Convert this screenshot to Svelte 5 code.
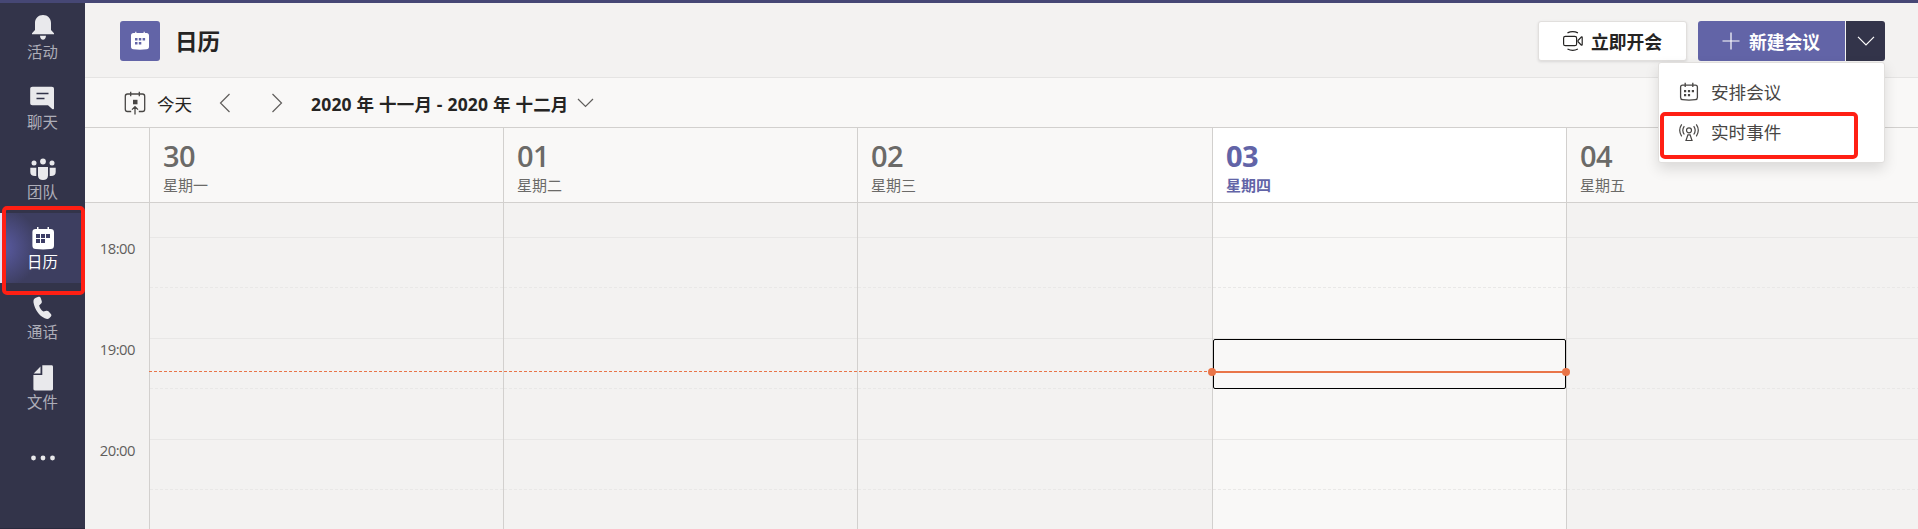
<script>
  const nav = [
    { id: 'activity', label: '活动' },
    { id: 'chat', label: '聊天' },
    { id: 'teams', label: '团队' },
    { id: 'calendar', label: '日历', active: true },
    { id: 'calls', label: '通话' },
    { id: 'files', label: '文件' },
    { id: 'more', label: '' }
  ];
  const days = [
    { num: '30', name: '星期一' },
    { num: '01', name: '星期二' },
    { num: '02', name: '星期三' },
    { num: '03', name: '星期四', today: true },
    { num: '04', name: '星期五' }
  ];
  const hours = ['18:00', '19:00', '20:00'];
</script>

<div class="app">
  <div class="strip"></div>
  <div class="body">
    <nav class="rail">
      {#each nav as item}
        <div class="item" class:active={item.active}>
          {#if item.id === 'activity'}
            <svg width="28" height="28" viewBox="0 0 28 28" fill="currentColor"><path d="M14 2c-4.600 0-8 3.300-8 8v7l-3 3.200v1h22v-1L22 17v-7c0-4.700-3.400-8-8-8zM11 22.700h6c-.2 2.600-1.400 4-3 4s-2.800-1.400-3-4z"/></svg>
          {:else if item.id === 'chat'}
            <svg width="28" height="28" viewBox="0 -.7 28 28" fill="currentColor"><path d="M3.500 3h19.200c1.600 0 2.300.7 2.300 2.200v19.300c0 1.500-1.200 1.200-1.800.7L19 21.600H3.500C1.900 21.600 1.200 21 1.200 19.400V5.200C1.200 3.700 1.900 3 3.500 3z"/><path d="M7.500 9.800h12M7.500 14.800h8" stroke="#33344a" stroke-width="1.300"/></svg>
          {:else if item.id === 'teams'}
            <svg width="28" height="28" viewBox="0 -3.500 28 28" fill="currentColor"><circle cx="14" cy="5" r="2.900"/><circle cx="5" cy="6.500" r="2.500"/><circle cx="23" cy="6.500" r="2.500"/><path d="M9 10.500h10V19c0 3-2 4.500-5 4.500S9 22 9 19zM1.300 11.200h6v8.200c-4 .4-6-1-6-4zM26.700 11.200h-6v8.200c4 .4 6-1 6-4z"/></svg>
          {:else if item.id === 'calendar'}
            <svg width="28" height="28" viewBox="0 -2 28 28" fill="#fff"><path d="M6.500 4H8V2h1.500v2h9V2H20v2h1.700c2 0 3.300 1.200 3.300 3.200v13.300c0 2.500-1.200 3.400-3.300 3.600-5.200.6-10 .6-15 0C4.500 23.900 3.400 23 3.400 20.500V7.200C3.400 5.200 4.500 4 6.500 4z"/><path d="M7 9h4v4H7zM12 9h4v4h-4zM17 9h4v4h-4zM7 14h4v4H7zM12 14h4v4h-4z" fill="#3d3e66"/></svg>
          {:else if item.id === 'calls'}
            <svg width="28" height="28" viewBox="0 -1.500 28 28" fill="currentColor"><path d="M6.800 3.200 9.500 2.300c1.100-.3 1.800.1 2.200 1.100l1.100 3.300c.2.900 0 1.600-.6 2.200L10.100 11c.8 2.700 2.100 4.600 4.300 6.100l3-.9c.8-.2 1.500 0 2 .6l2.500 2.700c.7.900.7 1.500 0 2.400l-1.700 1.800c-1.100.9-2.400.9-4.500 0C9.900 21 6 15.400 4.500 8c-.3-2.600.4-4.100 2.300-4.800z"/></svg>
          {:else if item.id === 'files'}
            <svg width="28" height="28" viewBox="0 -.8 28 28" fill="currentColor"><path d="M13.300 1.500h9.200c1 0 1.500.6 1.500 1.600v21.900c0 1-.6 1.600-1.600 1.600H6c-1 0-1.600-.6-1.600-1.600V11.300h8.900z"/><path d="M11.500 2.700v7H4.700z"/></svg>
          {:else}
            <svg width="28" height="28" viewBox="0 0 28 28" fill="currentColor"><circle cx="4.500" cy="14" r="2.400"/><circle cx="14" cy="14" r="2.400"/><circle cx="23.500" cy="14" r="2.400"/></svg>
          {/if}
          {#if item.label}<span>{item.label}</span>{/if}
        </div>
      {/each}
    </nav>

    <main>
      <header class="titlebar">
        <div class="tile">
          <svg width="20" height="20" viewBox="0 0 20 20" fill="#fff"><path d="M3.500 2h1.700V.7h1.200V2h7.200V.7h1.200V2h1.700C18.200 2 19 2.900 19 4.500v11c0 1.800-.8 2.600-2.400 2.800-4.300.6-8.800.6-13.200 0C1.800 18.100 1 17.300 1 15.500v-11C1 2.900 1.900 2 3.500 2z"/><path d="M5 7h2.500v2.500H5zM8.800 7h2.500v2.500H8.800zM12.600 7h2.500v2.500h-2.500zM5 11h2.500v2.500H5zM8.800 11h2.500v2.500H8.800z" fill="#6264a7"/></svg>
        </div>
        <h1>日历</h1>
        <button class="meet">
          <svg width="22" height="22" viewBox="0 0 22 22" fill="none" stroke="#252423" stroke-width="1.200"><rect x="1.600" y="6.300" width="13" height="9.400" rx="1.800"/><path d="m16 10.500 3.200-3.400q1-.7 1 .5v7q0 1.100-1 .4L16 11.700zM5.500 2.900q5.200-2.700 10.400 0M5.500 19q5.200 2.700 10.400 0"/></svg>
          <span>立即开会</span>
        </button>
        <div class="split">
          <button class="new">
            <svg width="18" height="18" viewBox="0 0 18 18" stroke="#fff" stroke-width="1.200"><path d="M9 .5v17M.5 9h17"/></svg>
            <span>新建会议</span>
          </button>
          <button class="drop" aria-label="更多">
            <svg width="18" height="10" viewBox="0 0 18 10" fill="none" stroke="#fff" stroke-width="1.200"><path d="m1 .8 8 8 8-8"/></svg>
          </button>
          <div class="menu">
            <div class="entry">
              <svg width="20" height="20" viewBox="0 0 20 20" fill="none" stroke="#484644" stroke-width="1.300"><path d="M3.600 3.200h12.800q2 0 2 2v10.300q0 2-2 2.200-6.400.7-12.800 0-2-.2-2-2.200V5.200q0-2 2-2zM6.200.8V5M13.800.8V5"/><path d="M5 8h2.200v2.200H5zM8.900 8h2.200v2.200H8.900zM12.800 8H15v2.200h-2.200zM5 12h2.200v2.200H5zM8.900 12h2.200v2.200H8.900z" fill="#484644" stroke="none"/></svg>
              <span>安排会议</span>
            </div>
            <div class="entry">
              <svg width="20" height="20" viewBox="0 0 20 20" fill="none" stroke="#484644" stroke-width="1.200"><circle cx="10" cy="8.300" r="2.500"/><path d="M8.900 12.800h2.200l1.900 5.700H7zM5.300 12.500q-3-4.200 0-8.400M14.700 12.500q3-4.200 0-8.400M2.700 14.300q-4-6 0-12M17.300 14.300q4-6 0-12"/></svg>
              <span>实时事件</span>
            </div>
          </div>
        </div>
      </header>

      <div class="toolbar">
        <svg class="today-icon" width="22" height="24" viewBox="0 0 22 24" fill="none" stroke="#484644" stroke-width="1.300"><path d="M7.200 20.500H3.500q-2.200 0-2.200-2.200V5.200Q1.300 3 3.500 3h15q2.200 0 2.200 2.200v13.100q0 2.200-2.200 2.200h-3.700M6.700.7v4.600M15.300.7v4.600M11 23.500v-7.700M8 18.600l3-3 3 3"/><path d="M9 8.800h4.500v4.500H9z" fill="#484644" stroke="none"/></svg>
        <span class="today-label">今天</span>
        <svg class="prev" width="12" height="20" viewBox="0 0 12 20" fill="none" stroke="#605e5c" stroke-width="1.200"><path d="m10.500 1-9 9 9 9"/></svg>
        <svg class="next" width="12" height="20" viewBox="0 0 12 20" fill="none" stroke="#605e5c" stroke-width="1.200"><path d="m1.500 1 9 9-9 9"/></svg>
        <span class="range">2020 年 十一月 - 2020 年 十二月</span>
        <svg class="caret" width="17" height="10" viewBox="0 0 17 10" fill="none" stroke="#605e5c" stroke-width="1.200"><path d="M1 1l7.500 7.500L16 1"/></svg>
      </div>

      <section class="week">
        <div class="gutter">
          <div class="corner"></div>
          {#each hours as hour}<div class="hour">{hour}</div>{/each}
        </div>
        {#each days as day}
          <div class="day" class:today={day.today}>
            <div class="day-head">
              <strong>{day.num}</strong>
              <span>{day.name}</span>
            </div>
            <div class="slots">
              <div class="lead"></div>
              {#each hours as hour}
                <div class="slot"><div class="half"></div></div>
              {/each}
              {#if day.today}
                <div class="selected"></div>
                <div class="now"></div>
              {/if}
            </div>
          </div>
        {/each}
        <div class="now-dash"></div>
      </section>
    </main>
  </div>
  <div class="mark nav-mark"></div>
  <div class="mark menu-mark"></div>
</div>

<style>
  :global(body) { margin: 0; overflow: hidden; }
  .app {
    position: relative; width: 1918px; height: 529px; overflow: hidden;
    display: flex; flex-direction: column; background: #f3f2f1; color: #252423;
    font-family: "Open Sans", "Noto Sans CJK SC", sans-serif;
  }
  .app *, .app { box-sizing: border-box; }
  svg { display: block; flex: none; }
  .strip { height: 3px; background: #464775; flex: none; }
  .body { display: flex; flex: 1; min-height: 0; }

  .rail { width: 85px; flex: none; background: #33344a; box-shadow: inset 0 -1px #292a3e; }
  .item {
    height: 70px; padding: 10px 0 0 1px; display: flex; flex-direction: column;
    align-items: center; color: #e9e9ec;
  }
  .item span { font-size: 15.4px; line-height: 20px; margin-top: 2px; margin-right: 1px; color: #adadb8; font-weight: 400; }
  .item.active {
    background: radial-gradient(circle 40px at 0 50%, #5b5ca5, #3d3e60);
    box-shadow: inset 3px 0 #e2e2f6;
  }
  .item.active span { color: #fff; }
  .item:last-child { padding-top: 21px; }

  main { flex: 1; min-width: 0; display: flex; flex-direction: column; }
  .titlebar { height: 75px; flex: none; display: flex; padding: 18px 33px 0 35px; border-bottom: 1px solid #e5e4e3; }
  .tile { width: 40px; height: 40px; border-radius: 3px; background: #6264a7; display: flex; align-items: center; justify-content: center; }
  h1 { margin: 0 auto 0 15px; font-size: 22.6px; line-height: 41px; font-weight: 700; }
  button { border: 0; padding: 0; margin: 0; font: inherit; display: flex; align-items: center; font-size: 17.8px; font-weight: 700; color: #252423; }
  .meet { width: 149px; height: 40px; background: #fff; border: 1px solid #e1dfdd; border-radius: 3px; padding-left: 23px; margin-right: 11px; box-shadow: 0 1px 3px #0000001c; }
  .meet span { margin: -1px 0 0 7px; }
  .split { position: relative; display: flex; height: 40px; }
  .new { width: 147px; background: #6264a7; color: #fff; border-radius: 3px 0 0 3px; padding-left: 24px; }
  .new span { margin: -1px 0 0 9px; }
  .drop { width: 39px; margin-left: 1px; background: #33344a; border-radius: 0 3px 3px 0; justify-content: center; }
  .menu {
    position: absolute; z-index: 5; right: 0; top: 41px; width: 227px; height: 101px; padding: 9px 0 0 20px;
    background: #fff; border: 1px solid #e1dfdd; border-radius: 3px; box-shadow: 0 6px 14px #00000020;
  }
  .entry { height: 40px; display: flex; align-items: center; font-size: 17.6px; font-weight: 400; color: #484644; }
  .entry span { margin: -1px 0 0 12px; }

  .toolbar { height: 50px; flex: none; display: flex; align-items: center; padding-left: 39px; background: #f9f8f7; border-bottom: 1px solid #d2d0ce; }
  .today-label { font-size: 17.6px; font-weight: 400; margin: 2px 0 0 11px; width: 62px; }
  .next { margin-left: 40px; }
  .range { margin: 2px 0 0 28px; width: 257px; font-size: 17.5px; font-weight: 700; white-space: nowrap; letter-spacing: .2px; }
  .caret { margin-left: 9px; }

  .week { position: relative; flex: 1; display: grid; grid-template-columns: 64px 354px 354px 355px 354px 352px; }
  .corner { height: 75px; background: #f9f8f7; border-bottom: 1px solid #d2d0ce; }
  .hour { height: 101px; padding: 35px 14px 0 0; text-align: right; font-size: 14.8px; line-height: 20px; letter-spacing: -.5px; color: #605e5c; }
  .day { border-left: 1px solid #d2d0ce; }
  .day-head { height: 75px; padding: 9px 0 0 13px; background: #f9f8f7; border-bottom: 1px solid #d2d0ce; color: #6b6a68; }
  .day-head strong { display: block; font-size: 29px; line-height: 38px; font-weight: 600; letter-spacing: -.6px; }
  .day-head span { display: block; font-size: 15px; line-height: 20px; font-weight: 400; }
  .today .day-head { background: #fff; color: #6264a7; }
  .today strong, .today .day-head span { font-weight: 700; }
  .slots { position: relative; }
  .today { background: #f9f8f7; }
  .lead { height: 34px; }
  .slot { height: 101px; border-top: 1px solid #e8e7e6; }
  .half { margin-top: 49px; height: 1px; background: repeating-linear-gradient(90deg, #e9e8e7 0 3px, transparent 3px 5px); }
  .selected { position: absolute; left: 0; right: 0; top: 136px; height: 50px; border: 1px solid #000; border-radius: 2px; }
  .now { position: absolute; left: 0; right: -1px; top: 168px; height: 2px; background: #e97548; }
  .now::before, .now::after { content: ''; position: absolute; top: -3px; width: 8px; height: 8px; border-radius: 50%; background: #e97548; }
  .now::before { left: -5px; }
  .now::after { right: -3px; }
  .now-dash { position: absolute; left: 64px; width: 1063px; top: 243px; height: 1px; background: repeating-linear-gradient(90deg, #e97548 0 3px, transparent 3px 5px); }

  .mark { position: absolute; z-index: 9; border: 4px solid #ff1f14; border-radius: 5px; }
  .nav-mark { left: 2px; top: 206px; width: 83px; height: 89px; }
  .menu-mark { left: 1660px; top: 112px; width: 198px; height: 47px; }
</style>
